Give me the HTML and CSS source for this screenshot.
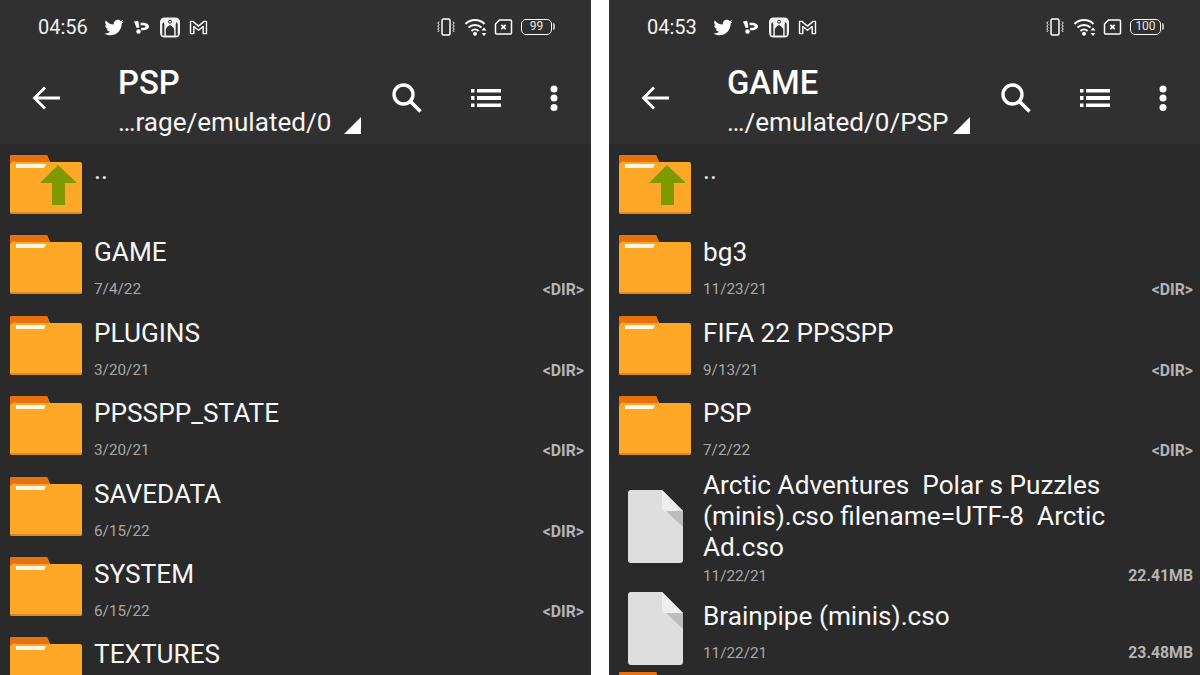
FILE: index.html
```html
<!DOCTYPE html>
<html lang="en">
<head>
<meta charset="UTF-8">
<title>File manager</title>
<link rel="stylesheet" href="styles.css">
</head>
<body>

<svg class="defs" width="0" height="0">
  <symbol id="i-folder" viewBox="0 0 72 59">
    <path d="M2 0H37L40 7H70a2 2 0 0 1 2 2V57a2 2 0 0 1-2 2H2a2 2 0 0 1-2-2V2a2 2 0 0 1 2-2Z" fill="#ffa726"/>
    <path d="M2 0H37L40 7H7a5 5 0 0 0-7 6V2a2 2 0 0 1 2-2Z" fill="#e8710f"/>
    <path d="M6 9H36L34 13H6Z" fill="#fff6e6"/>
    <path d="M0 57H72a2 2 0 0 1-2 2H2a2 2 0 0 1-2-2Z" fill="#e0891f"/>
  </symbol>
  <symbol id="i-up" viewBox="0 0 72 59">
    <use href="#i-folder"/>
    <path d="M48 10L67 28H55V50H42V28H30Z" fill="#7f9a00"/>
  </symbol>
  <symbol id="i-doc" viewBox="0 0 55 73">
    <path d="M3 0H34L55 21V70a3 3 0 0 1-3 3H3a3 3 0 0 1-3-3V3a3 3 0 0 1 3-3Z" fill="#dedede"/>
    <path d="M34 0L55 21H38a4 4 0 0 1-4-4Z" fill="#eeeeee"/>
    <path d="M38 21H55V37Z" fill="#bdbdbd"/>
  </symbol>
  <symbol id="i-twitter" viewBox="0 0 24 24">
    <path fill="#fff" d="M22.46 6c-.77.35-1.6.58-2.46.69.88-.53 1.56-1.37 1.88-2.38-.83.5-1.75.85-2.72 1.05C18.37 4.5 17.26 4 16 4c-2.35 0-4.27 1.92-4.27 4.29 0 .34.04.67.11.98C8.28 9.09 5.11 7.38 3 4.79c-.37.63-.58 1.37-.58 2.15 0 1.49.75 2.81 1.91 3.56-.71 0-1.37-.2-1.95-.5v.03c0 2.08 1.48 3.82 3.44 4.21a4.22 4.22 0 0 1-1.93.07 4.28 4.28 0 0 0 4 2.98 8.521 8.521 0 0 1-5.33 1.84c-.34 0-.68-.02-1.02-.06C3.44 20.29 5.7 21 8.12 21 16 21 20.33 14.46 20.33 8.79c0-.19 0-.37-.01-.56.84-.6 1.56-1.36 2.14-2.23z"/>
  </symbol>
  <symbol id="i-bang" viewBox="0 0 16 16">
    <path fill="#fff" d="M0 2l4.500-.8 1.300 7.300-3 .5Z"/>
    <circle cx="4.800" cy="12.800" r="2.400" fill="#fff"/>
    <path fill="#fff" d="M7 3.500h2.500c3.800 0 6.500 1.800 6.500 4s-2.700 4-6.500 4H7.500V8.800h1.800c1.700 0 3-.5 3-1.300s-1.300-1.300-3-1.300H7Z"/>
  </symbol>
  <symbol id="i-mosque" viewBox="0 0 20 20">
    <rect width="20" height="20" rx="4.500" fill="#f2f2f2"/>
    <path fill="#303030" d="M10 7.500c3 1.500 4.200 3.500 4.200 5V18H5.800v-5.500c0-1.500 1.200-3.500 4.200-5ZM2.300 6.500l1-2 1 2V18h-2ZM15.700 6.500l1-2 1 2V18h-2Z"/>
    <circle cx="10" cy="4.200" r="1.500" fill="none" stroke="#303030"/>
  </symbol>
  <symbol id="i-mail" viewBox="0 0 20 16">
    <path fill="none" stroke="#fff" stroke-width="1.500" stroke-linejoin="round" d="M1.500 14.500V1.500h2.500L10 6.500l6-5h2.500v13h-3.500V7L10 11 5 7v7.500Z"/>
  </symbol>
  <symbol id="i-vibrate" viewBox="0 0 18 18">
    <rect x="5" y="1" width="8" height="16" rx="1.500" fill="none" stroke="#fff" stroke-width="1.500"/>
    <path fill="none" stroke="#fff" d="M2 3.500L.8 5l1.200 1.500L.8 8l1.200 1.500L.8 11l1.200 1.500L.8 14M16 3.500L17.200 5 16 6.500 17.200 8 16 9.500l1.200 1.500-1.200 1.500 1.200 1.500"/>
  </symbol>
  <symbol id="i-wifi" viewBox="0 0 22 18">
    <g fill="none" stroke="#fff" stroke-width="2">
      <path d="M.5 6a13.500 13.500 0 0 1 19 0"/>
      <path d="M3.500 9.500a9.500 9.500 0 0 1 13 0"/>
      <path d="M6.500 13a5 5 0 0 1 7 0"/>
    </g>
    <circle cx="10" cy="15.800" r="2" fill="#fff"/>
    <path fill="#fff" d="M19 9.500l2.500 3h-5ZM19 18l2.500-3h-5Z"/>
  </symbol>
  <symbol id="i-sim" viewBox="0 0 18 16">
    <path fill="none" stroke="#fff" stroke-width="1.500" d="M5 1H16a1 1 0 0 1 1 1V14a1 1 0 0 1-1 1H2a1 1 0 0 1-1-1V5Z"/>
    <path stroke="#fff" stroke-width="1.800" d="M6.800 5.800l4.400 4.400M11.200 5.800l-4.400 4.400"/>
  </symbol>
  <symbol id="i-back" viewBox="0 0 28 24">
    <path fill="none" stroke="#fff" stroke-width="2.800" d="M28 12H3M13 1.500L2.500 12 13 22.500"/>
  </symbol>
  <symbol id="i-search" viewBox="0 0 30 30">
    <circle cx="11.500" cy="11.500" r="9.500" fill="none" stroke="#fff" stroke-width="3.400"/>
    <path stroke="#fff" stroke-width="3.600" d="M18.500 18.500L28.500 28.500"/>
  </symbol>
  <symbol id="i-list" viewBox="0 0 30 18">
    <path fill="#fff" d="M0 0h3.500v3.500H0ZM6 0h24v3.500H6ZM0 7h3.500v4H0ZM6 7h24v4H6ZM0 14.500h3.500V18H0ZM6 14.500h24V18H6Z"/>
  </symbol>
  <symbol id="i-more" viewBox="0 0 10 26">
    <circle cx="5" cy="4" r="3.500" fill="#fff"/>
    <circle cx="5" cy="13" r="3.500" fill="#fff"/>
    <circle cx="5" cy="22.500" r="3.500" fill="#fff"/>
  </symbol>
</svg>

<div class="screens">

  <section class="phone">
    <header class="appbar">
      <div class="status">
        <span class="time">04:56</span>
        <svg class="si si-tw"><use href="#i-twitter"/></svg>
        <svg class="si si-bang"><use href="#i-bang"/></svg>
        <svg class="si si-mosque"><use href="#i-mosque"/></svg>
        <svg class="si si-mail"><use href="#i-mail"/></svg>
        <span class="status-right">
          <svg class="si si-vib"><use href="#i-vibrate"/></svg>
          <svg class="si si-wifi"><use href="#i-wifi"/></svg>
          <svg class="si si-sim"><use href="#i-sim"/></svg>
          <span class="battery">99</span>
        </span>
      </div>
      <div class="toolbar">
        <svg class="back"><use href="#i-back"/></svg>
        <div class="heading">
          <div class="title">PSP</div>
          <div class="path"><span>&hellip;rage/emulated/0</span><i class="corner"></i></div>
        </div>
        <svg class="act act-search"><use href="#i-search"/></svg>
        <svg class="act act-list"><use href="#i-list"/></svg>
        <svg class="act act-more"><use href="#i-more"/></svg>
      </div>
    </header>
    <div class="files">
      <div class="row"><svg class="ic"><use href="#i-up"/></svg><div class="name dots">..</div></div>
      <div class="row"><svg class="ic"><use href="#i-folder"/></svg><div class="name">GAME</div><div class="date">7/4/22</div><div class="size">&lt;DIR&gt;</div></div>
      <div class="row"><svg class="ic"><use href="#i-folder"/></svg><div class="name">PLUGINS</div><div class="date">3/20/21</div><div class="size">&lt;DIR&gt;</div></div>
      <div class="row"><svg class="ic"><use href="#i-folder"/></svg><div class="name">PPSSPP_STATE</div><div class="date">3/20/21</div><div class="size">&lt;DIR&gt;</div></div>
      <div class="row"><svg class="ic"><use href="#i-folder"/></svg><div class="name">SAVEDATA</div><div class="date">6/15/22</div><div class="size">&lt;DIR&gt;</div></div>
      <div class="row"><svg class="ic"><use href="#i-folder"/></svg><div class="name">SYSTEM</div><div class="date">6/15/22</div><div class="size">&lt;DIR&gt;</div></div>
      <div class="row"><svg class="ic"><use href="#i-folder"/></svg><div class="name">TEXTURES</div></div>
    </div>
  </section>

  <section class="phone">
    <header class="appbar">
      <div class="status">
        <span class="time">04:53</span>
        <svg class="si si-tw"><use href="#i-twitter"/></svg>
        <svg class="si si-bang"><use href="#i-bang"/></svg>
        <svg class="si si-mosque"><use href="#i-mosque"/></svg>
        <svg class="si si-mail"><use href="#i-mail"/></svg>
        <span class="status-right">
          <svg class="si si-vib"><use href="#i-vibrate"/></svg>
          <svg class="si si-wifi"><use href="#i-wifi"/></svg>
          <svg class="si si-sim"><use href="#i-sim"/></svg>
          <span class="battery">100</span>
        </span>
      </div>
      <div class="toolbar">
        <svg class="back"><use href="#i-back"/></svg>
        <div class="heading">
          <div class="title">GAME</div>
          <div class="path"><span>&hellip;/emulated/0/PSP</span><i class="corner"></i></div>
        </div>
        <svg class="act act-search"><use href="#i-search"/></svg>
        <svg class="act act-list"><use href="#i-list"/></svg>
        <svg class="act act-more"><use href="#i-more"/></svg>
      </div>
    </header>
    <div class="files">
      <div class="row"><svg class="ic"><use href="#i-up"/></svg><div class="name dots">..</div></div>
      <div class="row"><svg class="ic"><use href="#i-folder"/></svg><div class="name">bg3</div><div class="date">11/23/21</div><div class="size">&lt;DIR&gt;</div></div>
      <div class="row"><svg class="ic"><use href="#i-folder"/></svg><div class="name">FIFA 22 PPSSPP</div><div class="date">9/13/21</div><div class="size">&lt;DIR&gt;</div></div>
      <div class="row"><svg class="ic"><use href="#i-folder"/></svg><div class="name">PSP</div><div class="date">7/2/22</div><div class="size">&lt;DIR&gt;</div></div>
      <div class="row row-long"><svg class="ic ic-doc"><use href="#i-doc"/></svg><div class="name">Arctic Adventures&nbsp; Polar s Puzzles (minis).cso filename=UTF-8&nbsp; Arctic Ad.cso</div><div class="date">11/22/21</div><div class="size">22.41MB</div></div>
      <div class="row row-file"><svg class="ic ic-doc"><use href="#i-doc"/></svg><div class="name">Brainpipe (minis).cso</div><div class="date">11/22/21</div><div class="size">23.48MB</div></div>
      <div class="row"><svg class="ic"><use href="#i-folder"/></svg></div>
    </div>
  </section>

</div>
</body>
</html>
```

FILE: styles.css
```css
html, body { margin: 0; padding: 0; background: #fff; }
body { font-family: Roboto, "Liberation Sans", sans-serif; color: #fff; }
.defs { display: block; height: 0; }

.screens { display: flex; justify-content: space-between; height: 675px; overflow: hidden; }
.phone { width: 591px; background: #2a2a2a; overflow: hidden; }

.appbar { height: 144px; background: #303030; }

/* status bar */
.status { display: flex; align-items: center; height: 54px; padding: 0 39px 0 38px; }
.time { font-size: 20px; color: #f2f2f2; width: 65px; }
.si { display: block; flex: none; }
.si-tw { width: 22px; height: 22px; margin-right: 9px; }
.si-bang { width: 15px; height: 16px; margin-right: 11px; }
.si-mosque { width: 20px; height: 21px; margin-right: 9px; }
.si-mail { width: 19px; height: 15px; }
.status-right { display: flex; align-items: center; margin-left: auto; }
.si-vib { width: 18px; height: 18px; margin-right: 10px; }
.si-wifi { width: 22px; height: 18px; margin-right: 7px; }
.si-sim { width: 19px; height: 16px; margin-right: 8px; }
.battery { position: relative; box-sizing: border-box; width: 31px; height: 16px; border: 1.5px solid #fff; border-radius: 5px; font-size: 12px; line-height: 13px; text-align: center; color: #e8e8e8; }
.battery::after { content: ""; position: absolute; right: -4px; top: 3px; width: 2px; height: 7px; background: #bbb; border-radius: 0 2px 2px 0; }

/* toolbar */
.toolbar { display: flex; align-items: flex-start; height: 90px; }
.back { flex: none; width: 28px; height: 24px; margin: 32px 58px 0 32px; }
.heading { width: 243px; flex: none; }
.title { font-size: 32.800px; font-weight: 500; line-height: 38px; margin-top: 10px; }
.path { display: flex; justify-content: space-between; font-size: 26.100px; line-height: 31px; margin-top: 5px; color: #f5f5f5; }
.corner { flex: none; width: 0; height: 0; margin-top: 10px; border-style: solid; border-width: 0 0 17px 17px; border-color: transparent transparent #fff transparent; }
.act { flex: none; display: block; }
.act-search { width: 30px; height: 30px; margin: 29px 0 0 31px; }
.act-list { width: 30px; height: 18px; margin: 35px 0 0 49px; }
.act-more { width: 10px; height: 26px; margin: 31px 0 0 48px; }

/* file rows */
.row { display: grid; grid-template-columns: 94px 1fr auto; grid-template-rows: auto auto; box-sizing: border-box; height: 80.400px; padding: 13px 7px 0 0; }
.ic { grid-row: 1 / 3; display: block; width: 72px; height: 59px; margin: -2px 0 0 10px; }
.ic-doc { width: 55px; height: 73px; margin-left: 19px; }
.name { grid-column: 2 / 4; font-size: 26.200px; line-height: 31px; color: #f7f7f7; }
.dots { margin-top: -2px; }
.date { grid-column: 2; margin-top: 6.500px; font-size: 15.300px; line-height: 20px; color: #a8a8a8; }
.size { grid-column: 3; margin-top: 7.500px; font-size: 15.800px; font-weight: 700; line-height: 20px; color: #b5b5b5; }

.row-long { height: 122px; padding-top: 4px; }
.row-long .name { width: 420px; }
.row-long .ic { margin-top: 20px; }
.row-long .date { margin-top: 1.500px; }
.row-long .size { margin-top: 1.500px; }
.row-file { height: 73.500px; }
.row-file .ic { margin-top: -9px; }
.row-file .date { margin-top: 10px; }
.row-file .size { margin-top: 10px; }
```
